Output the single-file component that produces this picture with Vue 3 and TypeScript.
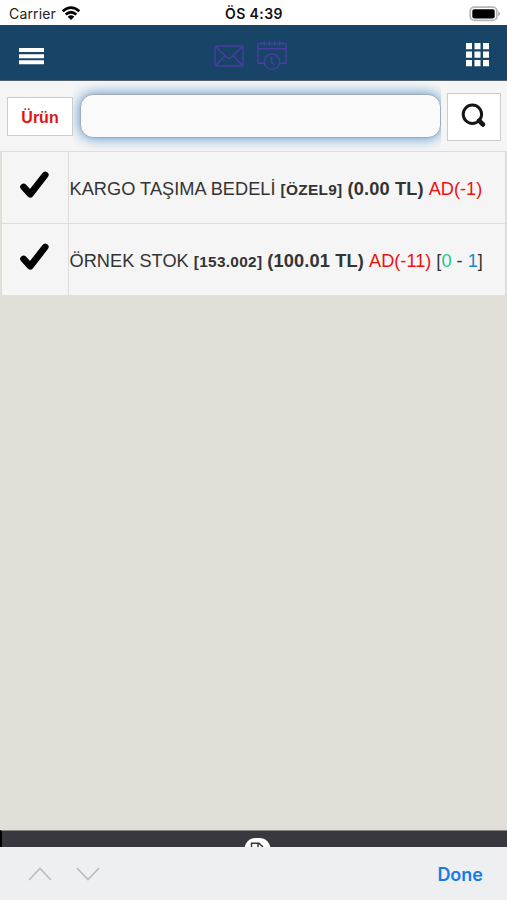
<script setup lang="ts">
interface Product {
  name: string
  code: string
  price: string
  unit: string
  stock?: [string, string]
}

const products: Product[] = [
  { name: 'KARGO TAŞIMA BEDELİ', code: 'ÖZEL9', price: '0.00 TL', unit: 'AD(-1)' },
  { name: 'ÖRNEK STOK', code: '153.002', price: '100.01 TL', unit: 'AD(-11)', stock: ['0', '1'] },
]
</script>

<template>
  <div class="screen">
    <div class="status">
      <span class="carrier">Carrier</span>
      <svg class="wifi" width="20" height="15" viewBox="0 0 20 15" fill="none" stroke="#000" stroke-width="2.7">
        <path d="M1.7 5.2Q10-2 18.3 5.2M4.7 8.5Q10 4 15.3 8.5" />
        <path d="M6.7 10.7Q10 8 13.3 10.7L10 14Z" fill="#000" stroke="none" />
      </svg>
      <span class="clock">ÖS 4:39</span>
      <svg class="battery" width="32" height="16" viewBox="0 0 32 16">
        <rect x="1.2" y="1.2" width="26.6" height="13.2" rx="4" fill="#fff" stroke="#b7b7b7" stroke-width="1.8" />
        <rect x="3.3" y="3.2" width="22.4" height="9.2" rx="1.8" fill="#000" />
        <path d="M29.3 5.2Q33 7.8 29.3 10.4Z" fill="#aaa" />
      </svg>
    </div>

    <header class="navbar">
      <svg class="menu" width="25" height="17" viewBox="0 0 25 17" fill="#fff">
        <path d="M0 0h25v4H0zM0 6.2h25v4H0zM0 12.3h25v4H0z" />
      </svg>
      <div class="nav-icons">
        <svg width="30" height="22" viewBox="0 0 30 22" fill="none" stroke="#493da1" stroke-width="1.5">
          <rect x="1" y="1" width="28" height="20" rx="1.2" />
          <path d="M1.5 1.5L12.6 12Q15 14.2 17.4 12L28.5 1.5M1.5 20.5L11 10.7M28.5 20.5L19 10.7" />
        </svg>
        <svg width="30" height="31" viewBox="0 0 30 31" fill="none" stroke="#493da1" stroke-width="1.5">
          <path d="M7.5 23.2H1V3.5H29V23.2H22.5M1 8.8H29M7.2 1v5M12.4 1v5M17.6 1v5M22.8 1v5" />
          <circle cx="15" cy="21.8" r="7.7" />
          <path d="M14.6 16.8V22.3L17.4 24.8" />
        </svg>
      </div>
      <svg class="grid" width="23" height="24" viewBox="0 0 23 24" fill="#fff">
        <path d="M0 0h6v6.3H0zM8.5 0h6v6.3h-6zM17 0h6v6.3h-6zM0 8.5h6v6.3H0zM8.5 8.5h6v6.3h-6zM17 8.5h6v6.3h-6zM0 17h6v6.3H0zM8.5 17h6v6.3h-6zM17 17h6v6.3h-6z" />
      </svg>
    </header>

    <div class="search">
      <button class="type-button">Ürün</button>
      <div class="field"><input class="input" type="text" /></div>
      <button class="find-button" aria-label="Ara">
        <svg width="26" height="26" viewBox="0 0 26 26" fill="none" stroke="#151515">
          <circle cx="11.4" cy="11.2" r="9.2" stroke-width="3" />
          <path d="M18 17.7L22 21.5" stroke-width="4.6" stroke-linecap="round" />
        </svg>
      </button>
    </div>

    <ul class="list">
      <li v-for="p in products" :key="p.code" class="row">
        <div class="check">
          <svg width="29" height="28" viewBox="0 0 29 28">
            <path d="M3.6 16L10.3 23.2L25.2 4" fill="none" stroke="#000" stroke-width="6.8" stroke-linecap="round" stroke-linejoin="round" />
          </svg>
        </div>
        <div class="info">
          <span class="name">{{ p.name }}</span>
          <b class="code">[{{ p.code }}]</b>
          <b class="price">({{ p.price }})</b>
          <span class="unit">{{ p.unit }}</span>
          <span v-if="p.stock" class="stock">[<i class="green">{{ p.stock[0] }}</i> - <i class="blue">{{ p.stock[1] }}</i>]</span>
        </div>
      </li>
    </ul>

    <footer class="bottom">
      <svg class="badge" width="27" height="9" viewBox="0 0 27 9">
        <rect x=".5" y="0" width="26" height="26" rx="11" fill="#fff" />
        <path d="M7.5 9V5.3H15L19 9M14 5.5V9" fill="none" stroke="#34343a" stroke-width="1.5" />
      </svg>
    </footer>

    <div class="accessory">
      <div class="arrows">
        <svg width="24" height="14" viewBox="0 0 24 14" fill="none" stroke="#bcbdc0" stroke-width="1.8"><path d="M1 13L12 1.5L23 13" /></svg>
        <svg width="24" height="14" viewBox="0 0 24 14" fill="none" stroke="#bcbdc0" stroke-width="1.8"><path d="M1 1L12 12.5L23 1" /></svg>
      </div>
      <span class="done">Done</span>
    </div>
  </div>
</template>

<style>
body {
  margin: 0;
}
</style>

<style scoped>
* {
  box-sizing: border-box;
}
svg {
  display: block;
  flex: none;
}
.screen {
  width: 507px;
  height: 900px;
  display: flex;
  flex-direction: column;
  overflow: hidden;
  background: #e1dfd8;
  font-family: "Liberation Sans", Arial, sans-serif;
}
.status {
  height: 25px;
  flex: none;
  display: grid;
  grid-template-columns: 52px 173px 1fr auto;
  align-items: center;
  padding: 1px 6px 0 9px;
  background: #fff;
  font-family: Inter, sans-serif;
  font-size: 14px;
  line-height: 25px;
  color: #222;
}
.wifi {
  margin-bottom: 1px;
}
.carrier {
  letter-spacing: 0.15px;
}
.clock {
  color: #111;
  font-weight: 600;
  font-size: 14px;
  letter-spacing: 0.4px;
  margin-left: -9px;
}
.navbar {
  height: 56px;
  flex: none;
  display: flex;
  align-items: center;
  justify-content: space-between;
  padding: 4px 18px 0 19px;
  background: #174467;
  border-bottom: 1px solid #52616e;
}
.menu {
  margin-top: 3px;
}
.nav-icons {
  display: flex;
  align-items: center;
  gap: 13px;
  margin: 2px 0 0 -9px;
}
.search {
  height: 70px;
  flex: none;
  display: flex;
  align-items: center;
  padding: 1px 6px 0 7px;
  background: #f5f5f5;
}
.type-button {
  width: 66px;
  height: 39px;
  padding: 3px 0 0;
  border: 1px solid #ccc;
  background: #fff;
  color: #e01414;
  font: bold 16px "Liberation Sans", Arial, sans-serif;
}
.field {
  width: 368px;
  height: 69px;
  padding: 12px 0 0 7px;
  overflow: hidden;
}
.input {
  display: block;
  width: 361px;
  height: 44px;
  border: 1px solid #a3acb4;
  border-radius: 13px;
  outline: none;
  background: #fafafa;
  box-shadow: 0 0 13px #4a8ec6;
}
.find-button {
  width: 54px;
  height: 48px;
  margin-left: auto;
  padding: 0 1px 1px 0;
  display: flex;
  align-items: center;
  justify-content: center;
  border: 1px solid #ccc;
  background: #fff;
}
.list {
  list-style: none;
  margin: 0;
  padding: 0 1px;
  flex: 1;
}
.row {
  display: flex;
  height: 72px;
  background: #f5f5f5;
  border: 1px solid #dddcd9;
  border-bottom: 0;
}
.check {
  width: 67px;
  flex: none;
  display: flex;
  align-items: center;
  justify-content: center;
  padding: 0 2px 5px 0;
  border-right: 1px solid #dddcd9;
}
.info {
  display: flex;
  align-items: baseline;
  gap: 5px;
  padding: 26px 0 0 0.5px;
  white-space: nowrap;
  font-size: 18.2px;
  line-height: 22px;
  color: #333;
}
.name {
  letter-spacing: 0.03px;
}
.code {
  font-size: 15.4px;
  letter-spacing: 0.3px;
}
.price {
  letter-spacing: 0.15px;
}
.unit {
  color: #f01010;
}
i {
  font-style: normal;
}
.green {
  color: #18c98b;
}
.blue {
  color: #168acb;
}
.bottom {
  height: 17px;
  flex: none;
  display: flex;
  justify-content: center;
  align-items: flex-end;
  padding-left: 6px;
  border-top: 1px solid #888;
  border-left: 2px solid #000;
  background: #39383e;
}
.accessory {
  height: 53px;
  flex: none;
  display: flex;
  align-items: center;
  justify-content: space-between;
  padding: 1px 24px 0 28px;
  background: #eeeff1;
}
.arrows {
  display: flex;
  gap: 24px;
}
.done {
  color: #147ce5;
  font: 600 18px Inter, sans-serif;
}
</style>
